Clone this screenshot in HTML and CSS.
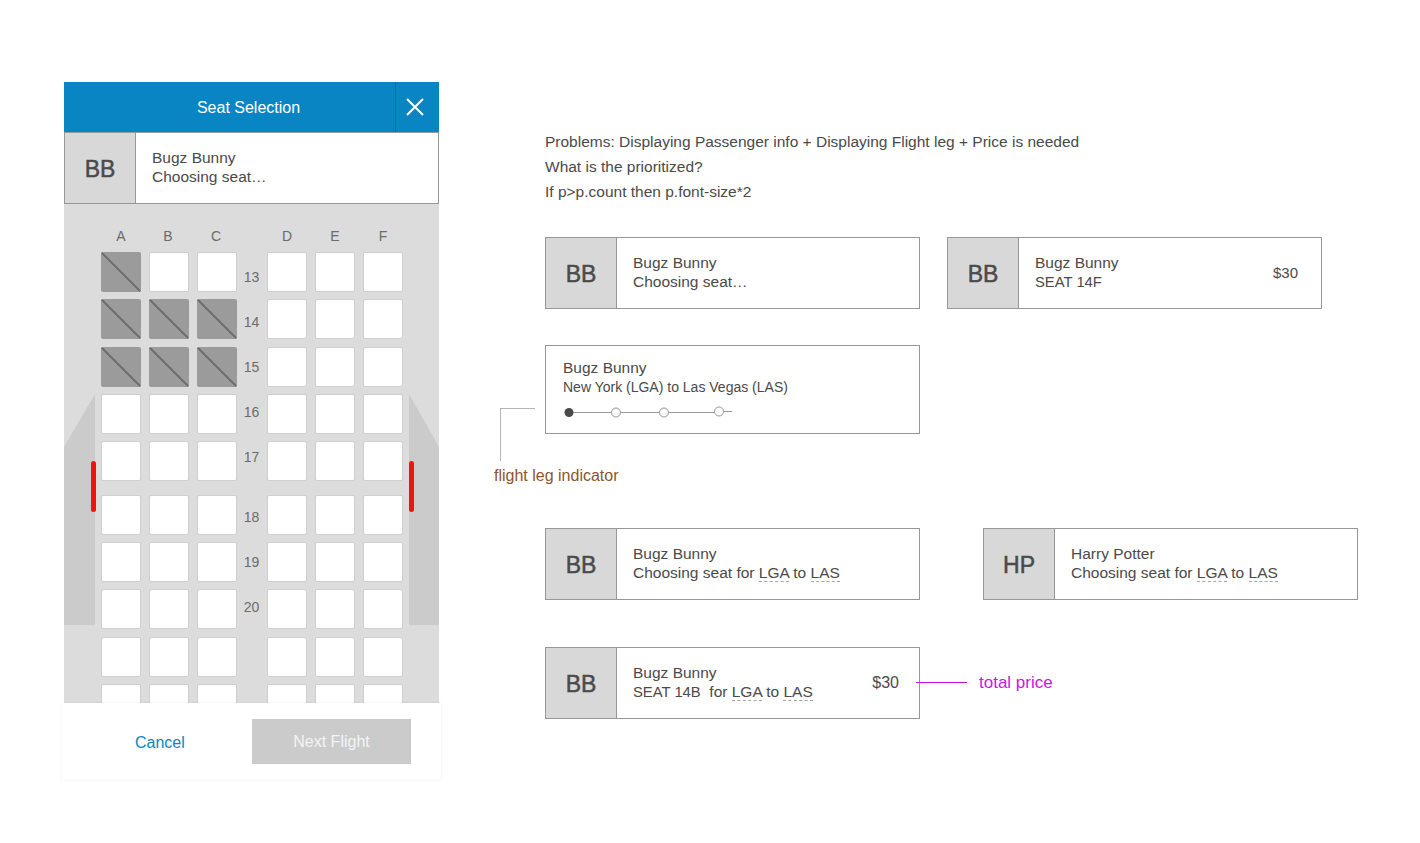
FILE: index.html
```html
<!DOCTYPE html>
<html lang="en">
<head>
<meta charset="utf-8">
<title>Seat Selection</title>
<link rel="stylesheet" href="styles.css">
</head>
<body>
<main class="board">
  <section class="phone">
    <header class="topbar">
      <h1 class="topbar-title">Seat Selection</h1>
      <button class="close" aria-label="Close">
        <svg width="18" height="18" viewBox="0 0 18 18"><path d="M1 1L17 17M17 1L1 17" stroke="#fff" stroke-width="2" fill="none"/></svg>
      </button>
    </header>
    <div class="card card-flush">
      <div class="avatar">BB</div>
      <div class="info"><div>Bugz Bunny</div><div>Choosing seat…</div></div>
    </div>
    <div class="cabin">
      <div class="wing wing-left"></div>
      <div class="wing wing-right"></div>
      <div class="exit-bar exit-bar-left"></div>
      <div class="exit-bar exit-bar-right"></div>
      <div class="seatmap">
        <div class="block">
          <div class="col">A</div><div class="col col-nudge">B</div><div class="col col-nudge">C</div>
          <div class="seat taken"></div><div class="seat"></div><div class="seat"></div>
          <div class="seat taken"></div><div class="seat taken"></div><div class="seat taken"></div>
          <div class="seat taken"></div><div class="seat taken"></div><div class="seat taken"></div>
          <div class="seat"></div><div class="seat"></div><div class="seat"></div>
          <div class="seat"></div><div class="seat"></div><div class="seat"></div>
          <div class="seat exit"></div><div class="seat exit"></div><div class="seat exit"></div>
          <div class="seat"></div><div class="seat"></div><div class="seat"></div>
          <div class="seat"></div><div class="seat"></div><div class="seat"></div>
          <div class="seat"></div><div class="seat"></div><div class="seat"></div>
          <div class="seat"></div><div class="seat"></div><div class="seat"></div>
        </div>
        <div class="aisle">
          <div class="row-no">13</div><div class="row-no">14</div><div class="row-no">15</div><div class="row-no">16</div><div class="row-no">17</div>
          <div class="row-no row-no-exit">18</div><div class="row-no">19</div><div class="row-no">20</div>
        </div>
        <div class="block">
          <div class="col">D</div><div class="col">E</div><div class="col">F</div>
          <div class="seat"></div><div class="seat"></div><div class="seat"></div>
          <div class="seat"></div><div class="seat"></div><div class="seat"></div>
          <div class="seat"></div><div class="seat"></div><div class="seat"></div>
          <div class="seat"></div><div class="seat"></div><div class="seat"></div>
          <div class="seat"></div><div class="seat"></div><div class="seat"></div>
          <div class="seat exit"></div><div class="seat exit"></div><div class="seat exit"></div>
          <div class="seat"></div><div class="seat"></div><div class="seat"></div>
          <div class="seat"></div><div class="seat"></div><div class="seat"></div>
          <div class="seat"></div><div class="seat"></div><div class="seat"></div>
          <div class="seat"></div><div class="seat"></div><div class="seat"></div>
        </div>
      </div>
    </div>
    <footer class="actions">
      <a class="cancel">Cancel</a>
      <button class="next">Next Flight</button>
    </footer>
  </section>

  <section class="notes">
    <div class="brief">
      <p>Problems: Displaying Passenger info + Displaying Flight leg + Price is needed</p>
      <p>What is the prioritized?</p>
      <p>If p&gt;p.count then p.font-size*2</p>
    </div>

    <div class="row row-first">
      <div class="card">
        <div class="avatar">BB</div>
        <div class="info"><div>Bugz Bunny</div><div>Choosing seat…</div></div>
      </div>
      <div class="card">
        <div class="avatar">BB</div>
        <div class="info"><div>Bugz Bunny</div><div><span class="seat-no">SEAT 14F</span></div></div>
        <div class="price">$30</div>
      </div>
    </div>

    <div class="row row-leg">
      <div class="card card-leg">
        <div class="leg-name">Bugz Bunny</div>
        <div class="leg-route">New York (LGA) to Las Vegas (LAS)</div>
        <svg class="legs" width="172" height="14" viewBox="0 0 172 14">
          <path d="M9 7.5H154" stroke="#979797" fill="none"/>
          <path d="M154 6.5H172" stroke="#979797" fill="none"/>
          <circle cx="9" cy="7.5" r="4.5" fill="#4a4a4a"/>
          <circle cx="56" cy="7.5" r="4.5" fill="#fff" stroke="#979797"/>
          <circle cx="104" cy="7.5" r="4.5" fill="#fff" stroke="#979797"/>
          <circle cx="159" cy="6.5" r="4.5" fill="#fff" stroke="#979797"/>
        </svg>
        <div class="elbow"></div>
        <div class="leg-note">flight leg indicator</div>
      </div>
    </div>

    <div class="row row-for">
      <div class="card">
        <div class="avatar">BB</div>
        <div class="info"><div>Bugz Bunny</div><div>Choosing seat for <span class="code">LGA</span> to <span class="code">LAS</span></div></div>
      </div>
      <div class="card">
        <div class="avatar">HP</div>
        <div class="info"><div>Harry Potter</div><div>Choosing seat for <span class="code">LGA</span> to <span class="code">LAS</span></div></div>
      </div>
    </div>

    <div class="row row-total">
      <div class="card">
        <div class="avatar">BB</div>
        <div class="info"><div>Bugz Bunny</div><div><span class="seat-no">SEAT 14B</span>&nbsp; for <span class="code">LGA</span> to <span class="code">LAS</span></div></div>
        <div class="price price-total">$30</div>
        <div class="total-line"></div>
        <div class="total-note">total price</div>
      </div>
    </div>
  </section>
</main>
</body>
</html>
```

FILE: styles.css
```css
* { box-sizing: border-box; }

html, body { margin: 0; padding: 0; background: #fff; }

body {
  font-family: "Liberation Sans", Arial, sans-serif;
  color: #4a4a4a;
  font-size: 15.5px;
}

.board {
  display: flex;
  align-items: flex-start;
  padding: 82px 0 0 64px;
  height: 843px;
  overflow: hidden;
}

/* Phone */
.phone { width: 375px; flex: none; }

.topbar {
  display: flex;
  height: 50px;
  background: #0a85c3;
  color: #fff;
}

.topbar-title {
  flex: 1;
  margin: 0;
  padding: 1px 2px 0 40px;
  font-size: 16px;
  font-weight: 400;
  line-height: 50px;
  text-align: center;
}

.close {
  display: flex;
  align-items: center;
  justify-content: center;
  width: 44px;
  padding: 0 5px 0 0;
  background: none;
  border: 0;
  border-left: 1px solid #0a6ea3;
}

.cabin {
  position: relative;
  height: 499px;
  padding: 24px 0 0 37px;
  background: #dcdcdc;
  overflow: hidden;
}

.wing {
  position: absolute;
  top: 190px;
  width: 31px;
  height: 231px;
  background: #cbcbcb;
}
.wing-left { left: 0; clip-path: polygon(100% 0, 100% 100%, 0 100%, 0 53px); }
.wing-right { right: 0; width: 30px; clip-path: polygon(0 0, 100% 53px, 100% 100%, 0 100%); }

.exit-bar {
  position: absolute;
  top: 257px;
  width: 5px;
  height: 51px;
  border-radius: 2.5px;
  background: #ee150b;
}
.exit-bar-left { left: 27px; }
.exit-bar-right { right: 25px; }

.seatmap { position: relative; display: flex; align-items: flex-start; }

.block {
  display: grid;
  grid-template-columns: repeat(3, 40px);
  column-gap: 8px;
  row-gap: 7.25px;
}

.col {
  height: 16.75px;
  font-size: 14px;
  line-height: 16px;
  color: #6b6b6b;
  text-align: center;
}
.col-nudge { padding-right: 2px; }

.seat {
  height: 40px;
  background: #fff;
  border: 1px solid #cfcfcf;
  border-radius: 2px;
}
.seat.exit { margin-top: 6.5px; }
.seat.taken {
  border: 0;
  background: linear-gradient(45deg, #9b9b9b calc(50% - 1px), #707070 calc(50% - 1px), #707070 calc(50% + 1px), #9b9b9b calc(50% + 1px));
}

.aisle { width: 30px; padding: 26.5px 1px 0 0; flex: none; }
.row-no {
  height: 45px;
  font-size: 14px;
  line-height: 45px;
  color: #6b6b6b;
  text-align: center;
}
.row-no-exit { margin-top: 15px; }

.actions {
  position: relative;
  display: flex;
  align-items: center;
  justify-content: space-between;
  width: 379px;
  height: 77px;
  margin-left: -2px;
  padding: 0 30px 0 73px;
  background: #fff;
  box-shadow: 0 0 3px rgba(0, 0, 0, 0.07);
}

.cancel { padding-top: 2px; font-size: 16px; color: #0a85c3; }

.next {
  width: 159px;
  height: 45px;
  padding: 0;
  border: 0;
  background: #cbcbcb;
  color: #f4f4f4;
  font: inherit;
  font-size: 16px;
}

/* Notes */
.notes { margin-left: 106px; padding-top: 47px; flex: none; }

.brief { line-height: 25px; }
.brief p { margin: 0; }

.row { display: flex; }
.row-first { margin-top: 33px; gap: 27px; }
.row-leg { margin-top: 36px; }
.row-for { margin-top: 94px; gap: 63px; }
.row-total { margin-top: 47px; }

.card {
  position: relative;
  display: flex;
  align-items: stretch;
  width: 375px;
  height: 72px;
  background: #fff;
  border: 1px solid #979797;
}
.card-flush { align-items: stretch; }

.avatar {
  flex: none;
  width: 71px;
  background: #d8d8d8;
  border-right: 1px solid #979797;
  font-size: 23px;
  line-height: 72px;
  text-align: center;
  -webkit-text-stroke: 0.5px #4a4a4a;
}

.info {
  flex: 1;
  padding: 15px 0 0 16px;
  line-height: 19px;
}

.seat-no { font-size: 14.8px; }

.price { padding: 26px 23px 0 0; font-size: 15px; line-height: 18px; }
.price-total { padding: 26px 20px 0 0; font-size: 16px; }

.code { border-bottom: 1px dashed #a5a5a5; }

.card-leg {
  display: block;
  height: 89px;
  padding: 12px 0 0 17px;
}
.leg-name { line-height: 19px; }
.leg-route { font-size: 14px; line-height: 20px; }
.legs { display: block; margin: 8px 0 0 -3px; }

.elbow {
  position: absolute;
  left: -46px;
  top: 62px;
  width: 35px;
  height: 53px;
  border-top: 1px solid #b4b4b4;
  border-left: 1px solid #b4b4b4;
}
.leg-note {
  position: absolute;
  left: -52px;
  top: 120px;
  font-size: 16px;
  line-height: 20px;
  color: #8b572a;
  white-space: nowrap;
}

.total-line {
  position: absolute;
  left: 370px;
  top: 34px;
  width: 51px;
  border-top: 1px solid #d010e8;
}
.total-note {
  position: absolute;
  left: 433px;
  top: 26px;
  font-size: 17px;
  line-height: 18px;
  color: #d010e8;
  white-space: nowrap;
}
```
